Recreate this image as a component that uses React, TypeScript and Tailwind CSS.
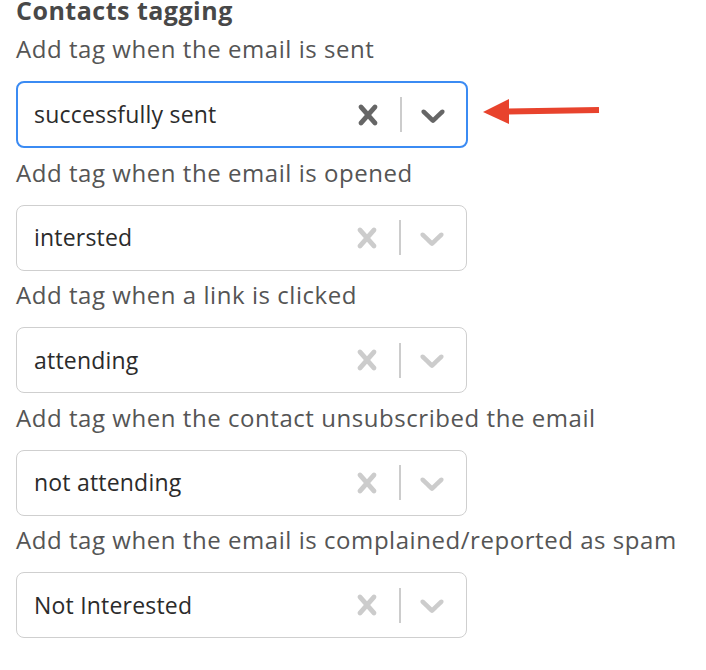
import React from "react";

const fields = [
  { label: "Add tag when the email is sent", value: "successfully sent", focused: true },
  { label: "Add tag when the email is opened", value: "intersted" },
  { label: "Add tag when a link is clicked", value: "attending" },
  { label: "Add tag when the contact unsubscribed the email", value: "not attending" },
  { label: "Add tag when the email is complained/reported as spam", value: "Not Interested" },
];

const CrossIcon = ({ className }: { className: string }) => (
  <svg viewBox="0 0 20 20" className={className} fill="currentColor">
    <path d="M14.348 14.849c-0.469 0.469-1.229 0.469-1.697 0l-2.651-3.030-2.651 3.029c-0.469 0.469-1.229 0.469-1.697 0-0.469-0.469-0.469-1.229 0-1.697l2.758-3.150-2.759-3.152c-0.469-0.469-0.469-1.228 0-1.697s1.228-0.469 1.697 0l2.652 3.031 2.651-3.031c0.469-0.469 1.228-0.469 1.697 0s0.469 1.229 0 1.697l-2.758 3.152 2.758 3.150c0.469 0.469 0.469 1.229 0 1.698z" />
  </svg>
);

const ChevronIcon = ({ className }: { className: string }) => (
  <svg viewBox="0 0 20 20" className={className} fill="currentColor">
    <path d="M4.516 7.548c0.436-0.446 1.043-0.481 1.576 0l3.908 3.747 3.908-3.747c0.533-0.481 1.141-0.446 1.574 0 0.436 0.445 0.408 1.197 0 1.615-0.406 0.418-4.695 4.502-4.695 4.502-0.217 0.223-0.502 0.335-0.787 0.335s-0.57-0.112-0.789-0.335c0 0-4.287-4.084-4.695-4.502s-0.436-1.170 0-1.615z" />
  </svg>
);

const TagSelect = ({ value, focused }: { value: string; focused?: boolean }) => (
  <div
    className={
      focused
        ? "flex items-center w-[452px] h-[67px] rounded-[8px] border-2 border-[#3b8bf3] bg-white"
        : "flex items-center w-[451px] h-[66px] rounded-[8px] border border-[#cfcfcf] bg-white"
    }
  >
    <div className={focused ? "flex-1 pl-[16px] text-[23px] tracking-[0.2px] text-[#2b2b2b]" : "flex-1 pl-[17px] text-[23px] tracking-[0.2px] text-[#2b2b2b]"}>
      {value}
    </div>
    <div className="flex items-center">
      <CrossIcon className={focused ? "w-[40px] h-[40px] text-[#666666]" : "w-[40px] h-[40px] text-[#cccccc]"} />
      <span className="ml-[12px] w-[2px] h-[35px] bg-[#cccccc]" />
      <ChevronIcon className={focused ? "ml-[11px] w-[40px] h-[40px] text-[#666666]" : "ml-[11px] w-[40px] h-[40px] text-[#cccccc]"} />
    </div>
    <div className={focused ? "w-[13px]" : "w-[14px]"} />
  </div>
);

export default function App() {
  return (
    <div className="relative w-[706px] h-[670px] bg-white pl-[16px] font-['Open_Sans',sans-serif]">
      <h2 className="text-[25px] font-bold leading-[20px] tracking-[0.5px] text-[#484848]">Contacts tagging</h2>
      <div className="mt-[12px] flex flex-col">
        {fields.map((f) => (
          <div key={f.label} className="mb-[7.5px]">
            <div className="text-[24px] leading-[34px] tracking-[0.55px] text-[#555555]">{f.label}</div>
            <div className="mt-[15px]">
              <TagSelect value={f.value} focused={f.focused} />
            </div>
          </div>
        ))}
      </div>
      <svg className="absolute left-[480px] top-[96px]" width="125" height="32" viewBox="0 0 125 32">
        <line x1="26" y1="15.5" x2="119" y2="14" stroke="#e8432d" strokeWidth="6" />
        <polygon points="3,16 29,3 29,28" fill="#e8432d" />
      </svg>
    </div>
  );
}
